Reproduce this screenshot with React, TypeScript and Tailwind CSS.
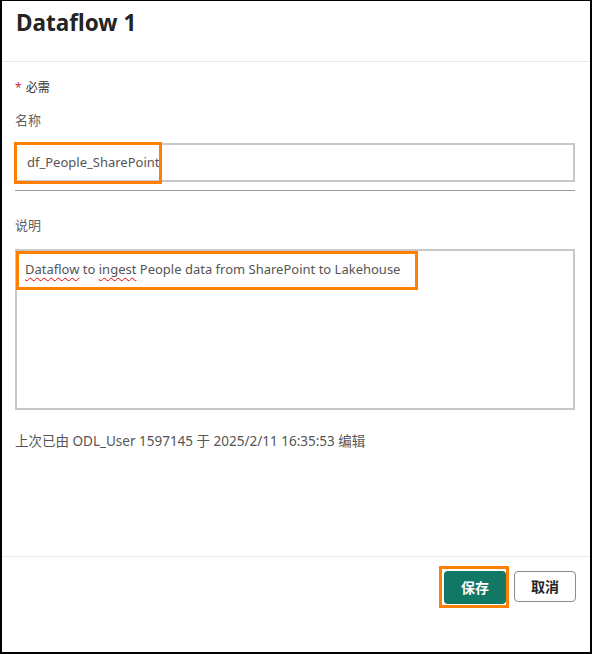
import React from 'react';

const font = { fontFamily: '"Noto Sans", "Noto Sans CJK SC", sans-serif' };

const Highlight: React.FC<{ className: string }> = ({ className }) => (
  <div className={`pointer-events-none absolute border-[3px] border-[#ff8000] ${className}`} />
);

const App: React.FC = () => {
  return (
    <div
      className="w-[592px] h-[654px] bg-white border-l-2 border-t border-r-2 border-b-2 border-black flex flex-col text-[#323130]"
      style={font}
    >
      {/* Header */}
      <div className="h-[61px] border-b border-[#e8e8e8] px-[14px] pt-[6px] flex-shrink-0">
        <h1 className="text-[22.5px] leading-[32px] font-bold text-[#242424]">Dataflow 1</h1>
      </div>

      {/* Body */}
      <div className="flex-grow pl-[13px] pr-[15px]">
        <div className="mt-[17px] h-[18px] flex items-center text-[12px] text-[#323130]">
          <span className="text-[#c4314b] mr-[4px]">*</span>
          <span>必需</span>
        </div>

        <div className="mt-[15px] h-[18px] flex items-center text-[13px] text-[#616161]">名称</div>

        <div className="relative mt-[13px]">
          <div className="h-[39px] border-2 border-[#c8c8c8] flex items-center pl-[10px] text-[13px] text-[#555]">
            df_People_SharePoint
          </div>
          <Highlight className="-left-[1px] -top-[1px] w-[148px] h-[42px]" />
        </div>
        <div className="mt-[8px] h-[1px] bg-[#9a9a9a]" />

        <div className="mt-[26px] h-[18px] flex items-center text-[13px] text-[#616161]">说明</div>

        <div className="relative mt-[14px] h-[161px] border-2 border-[#c8c8c8] pl-[8px] pt-[7px]">
          <div className="text-[13px] leading-[22px] text-[#555]">
            <span className="underline decoration-wavy decoration-[#e00] decoration-1 underline-offset-[3px]">Dataflow</span> to{' '}
            <span className="underline decoration-wavy decoration-[#e00] decoration-1 underline-offset-[3px]">ingest</span> People data from
            SharePoint to Lakehouse
          </div>
          <Highlight className="left-[-1px] top-0 w-[402px] h-[39px]" />
        </div>

        <div className="mt-[22px] h-[18px] flex items-center text-[13.5px] text-[#555]">
          上次已由 ODL_User 1597145 于 2025/2/11 16:35:53 编辑
        </div>
      </div>

      {/* Footer */}
      <div className="h-[96px] border-t border-[#e8e8e8] flex-shrink-0 flex justify-end items-start pr-[14px] pt-[14px] gap-[8px]">
        <div className="relative">
          <button className="h-[33px] w-[62px] rounded-[4px] bg-[#117865] text-white text-[14px] font-bold">保存</button>
          <Highlight className="-left-[5px] -top-[5px] w-[70px] h-[42px]" />
        </div>
        <button className="h-[31px] w-[62px] rounded-[4px] border border-[#8a8a8a] bg-white text-[#242424] text-[14px] font-bold">
          取消
        </button>
      </div>
    </div>
  );
};

export default App;
